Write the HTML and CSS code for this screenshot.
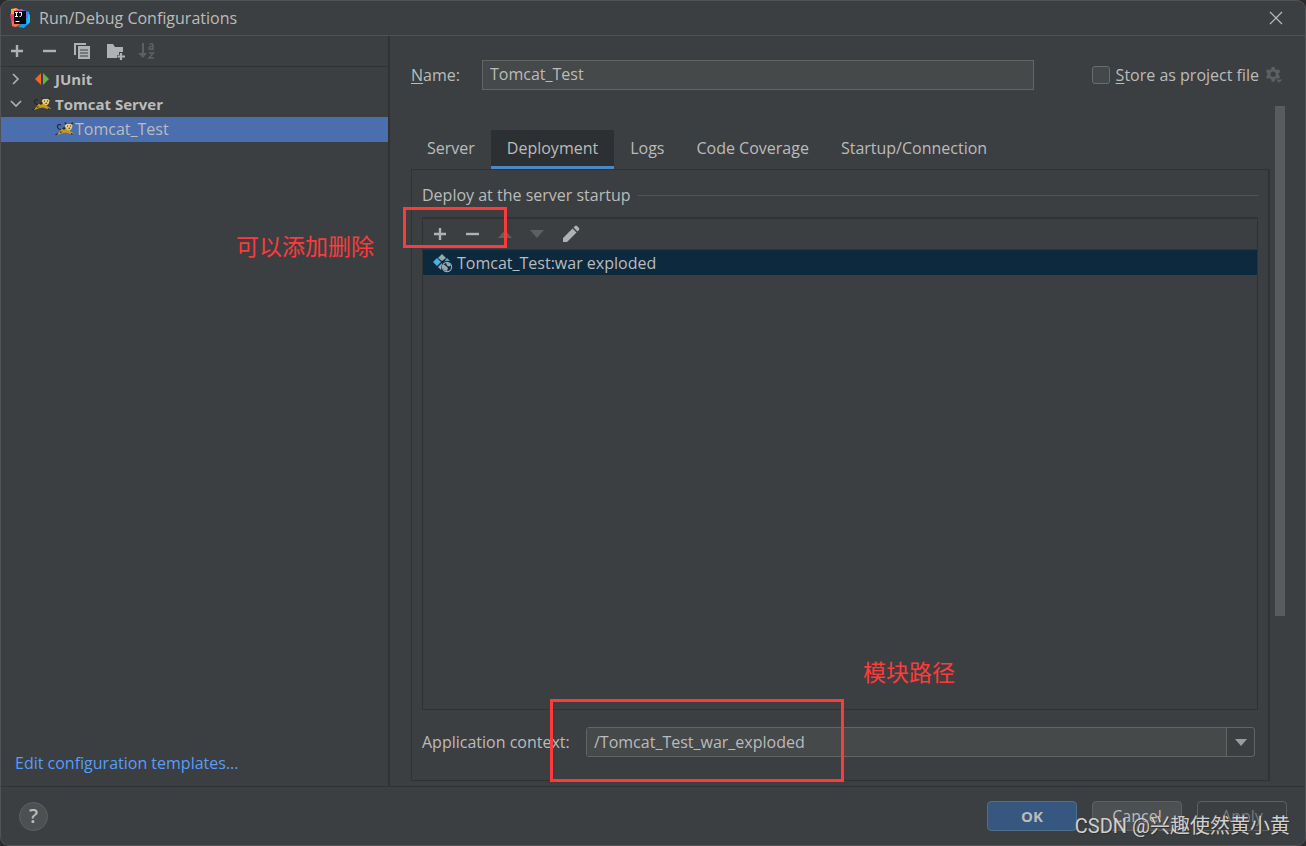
FILE: index.html
```html
<!DOCTYPE html>
<html lang="en">
<head>
<meta charset="utf-8">
<title>Run/Debug Configurations</title>
<link rel="stylesheet" href="styles.css">
</head>
<body>
<svg class="defs" aria-hidden="true">
  <symbol id="plus" viewBox="0 0 20 20"><path d="M10 4v12M4 10h12" stroke="currentColor" stroke-width="2.4" fill="none"/></symbol>
  <symbol id="minus" viewBox="0 0 20 20"><path d="M3 10h13" stroke="currentColor" stroke-width="2.4" fill="none"/></symbol>
  <symbol id="tomcat" viewBox="0 0 20 16">
    <path d="M6.500 8.500C3 9 1.500 5.500 3 4c1-1 2.500-.5 3 .5" fill="none" stroke="#20242a" stroke-width="1.100"/>
    <path d="M6 8.500l4-2 3 1 2 2.500 3.500 2v1.200l-4-.4-3.500-1.200-4 .6-4 1.600H1l3-2.300z" fill="#c99a1a"/>
    <path d="M7 7.500l2-1.500 2 1-2 2zM0 13.500l3-1.500v1l-2 1.200zM16 12l3 1.200-3 .2zM5 10.500l3 .5-3 .8z" fill="#25272a"/>
    <path d="M10 2.500l2 .5h3l2-.5.5 2.500-1 3-2 1.500-3-1.500-1.500-2.500z" fill="#e6cd7e"/>
    <path d="M9.500 1l2.500 1.500-2 1.500zM18 1l-2.500 1.500 2 1.500zM12 4.500h1v1h-1zM15 4.500h1v1h-1zM13.500 6.800h1.500v1h-1.500z" fill="#25272a"/>
  </symbol>
</svg>
<div class="dialog">
  <header class="titlebar">
    <svg class="logo" viewBox="0 0 20 20" aria-hidden="true">
      <path d="M1 1l5-1 6 3-4 9-7 1z" fill="#fca43c"/>
      <path d="M6 2l6-1 4 4-8 5z" fill="#f43b92"/>
      <path d="M0 6l6 1v12l-4-1z" fill="#f3346c"/>
      <path d="M2 13l9 3-5 3-4-1z" fill="#fb704a"/>
      <path d="M12 2l7 2 1 10-6 6-6-1 5-5z" fill="#149cf2"/>
      <path d="M13 2l3 1 2 4-2 4z" fill="#7960e8"/>
      <path d="M18 6l2 1v7l-3 3z" fill="#12c6f4"/>
      <path d="M4 3h12v13H4z" fill="#080508"/>
      <path d="M5 4.500h3M6.500 4.500v4M5 8.500h3M9 4.500h2.500v3q0 1-2 1M5.500 13.500h4" stroke="#fff" fill="none"/>
    </svg>
    <h1 class="title">Run/Debug Configurations</h1>
    <button class="close" aria-label="Close"><svg viewBox="0 0 14 14"><path d="M1 1l12 12M13 1L1 13" stroke="currentColor" stroke-width="1.200"/></svg></button>
  </header>
  <div class="content">
    <aside class="sidebar">
      <div class="toolbar">
        <button class="tool" aria-label="Add"><svg><use href="#plus"/></svg></button>
        <button class="tool" aria-label="Remove"><svg><use href="#minus"/></svg></button>
        <button class="tool" aria-label="Copy"><svg viewBox="0 0 20 20"><path d="M1 14V2h12v2H3v10z" fill="currentColor"/><path d="M5 5h12v13H5z" fill="currentColor"/><path d="M7 9h8M7 12h8M7 15h8" stroke="#3c3f41" stroke-width="1"/></svg></button>
        <button class="tool" aria-label="New folder"><svg viewBox="0 0 20 20"><path d="M1 3h6l2 3h8v5h-4v3h-2v3H1z" fill="currentColor"/><path d="M15 12v7M11.500 15.500h7.500" stroke="currentColor" stroke-width="2.200"/></svg></button>
        <button class="tool off" aria-label="Sort alphabetically" disabled><svg viewBox="0 0 20 20"><path d="M3 2h2v10h3l-4 5-5-5h4z" fill="currentColor"/><g fill="none" stroke="currentColor" stroke-width="1.500"><path d="M10.500 3.500q3.500-2 3.500 1V9M14 5.500q-4-.5-4 1.700 0 2 4 .3M10 12h4.500l-4.500 5h5"/></g></svg></button>
      </div>
      <ul class="tree">
        <li class="node"><svg class="chevron" viewBox="0 0 12 12"><path d="M3 1l5 5-5 5"/></svg><svg class="kind" viewBox="0 0 20 16"><path d="M9 2v12L3 8z" fill="#f26522"/><path d="M11 2v12l6-6z" fill="#62b543"/></svg><b>JUnit</b></li>
        <li class="node"><svg class="chevron" viewBox="0 0 12 12"><path d="M1 3l5 5 5-5"/></svg><svg class="kind"><use href="#tomcat"/></svg><b>Tomcat Server</b></li>
        <li class="node leaf"><svg class="kind"><use href="#tomcat"/></svg><span>Tomcat_Test</span></li>
      </ul>
      <a class="templates" href="#">Edit configuration templates...</a>
    </aside>
    <main class="main">
      <div class="name-row">
        <label class="name-label" for="name"><u>N</u>ame:</label>
        <input class="field" id="name" type="text" value="Tomcat_Test">
        <div class="store">
          <input class="check" id="store" type="checkbox">
          <label for="store"><u>S</u>tore as project file</label>
          <button class="gear" aria-label="Storage options"><svg viewBox="0 0 20 20"><path d="M7 1h3l.5 2.300 1.700 1 2.200-.8 1.600 2.700-1.700 1.500v1.800L16 11l-1.600 2.700-2.200-.8-1.700 1L10 16.500H7l-.5-2.600-1.700-1-2.200.8L1 11l1.700-1.500V7.700L1 6.200l1.600-2.700 2.200.8 1.700-1zM8.500 5.800a2.800 2.800 0 1 0 0 5.600 2.800 2.800 0 0 0 0-5.600z" fill="currentColor" fill-rule="evenodd"/><path d="M11 14h8l-4 4z" fill="currentColor" stroke="#3c3f41" stroke-width=".6"/></svg></button>
        </div>
      </div>
      <div class="scroll-area">
        <div class="page">
          <nav class="tabs" role="tablist">
            <button class="tab" role="tab">Server</button>
            <button class="tab active" role="tab" aria-selected="true">Deployment</button>
            <button class="tab" role="tab">Logs</button>
            <button class="tab" role="tab">Code Coverage</button>
            <button class="tab" role="tab">Startup/Connection</button>
          </nav>
          <section class="panel">
            <h2 class="legend">Deploy at the server startup</h2>
            <div class="artifacts">
              <div class="toolbar inner">
                <button class="tool" aria-label="Add artifact"><svg><use href="#plus"/></svg></button>
                <button class="tool" aria-label="Remove artifact"><svg><use href="#minus"/></svg></button>
                <button class="tool off" aria-label="Move up" disabled><svg viewBox="0 0 20 20"><path d="M2 14l7-8 7 8z" fill="currentColor"/></svg></button>
                <button class="tool off" aria-label="Move down" disabled><svg viewBox="0 0 20 20"><path d="M1 6h14l-7 8z" fill="currentColor"/></svg></button>
                <button class="tool" aria-label="Edit"><svg viewBox="0 0 20 20"><path d="M1 14l9.500-9.500 4 4L5 18H1zM11.500 3.500l1.500-1.500q1-.8 2 0l2 2q.8 1 0 2l-1.500 1.500z" fill="currentColor"/></svg></button>
                <div class="mark mark-add"></div>
              </div>
              <ul class="list">
                <li class="artifact"><svg viewBox="0 0 20 20"><path d="M9 1l4 4-4 3-4-3z" fill="#9aa7b0"/><path d="M4 5l4 4-4 4-4-4z" fill="#40b6e0"/><path d="M14 5l3 3q-4-1-6 1z" fill="#40b6e0"/><path d="M9 10l-1 7-3-3z" fill="#9aa7b0"/><circle cx="14" cy="14" r="4.600" fill="none" stroke="#9aa7b0" stroke-width="1.200"/><path d="M10 11l3 2 2 2-1 3-3-1-1.500-3zM13 9.500l4 1 1 2-2 1-2-1z" fill="#9aa7b0"/></svg><span>Tomcat_Test:war exploded</span></li>
              </ul>
            </div>
            <div class="context-row">
              <label for="context">Application context:</label>
              <div class="combo">
                <input id="context" type="text" value="/Tomcat_Test_war_exploded">
                <button aria-label="Show contexts"><svg viewBox="0 0 12 7"><path d="M0 0h12L6 7z" fill="currentColor"/></svg></button>
              </div>
              <div class="mark mark-context"></div>
            </div>
          </section>
        </div>
        <div class="track"><div class="thumb"></div></div>
      </div>
    </main>
  </div>
  <footer class="footer">
    <button class="help" aria-label="Help">?</button>
    <button class="button primary">OK</button>
    <button class="button">Cancel</button>
    <button class="button ghost" disabled>Apply</button>
  </footer>
  <p class="note note-add" lang="zh">可以添加删除</p>
  <p class="note note-path" lang="zh">模块路径</p>
  <p class="watermark" lang="zh">CSDN @兴趣使然黄小黄</p>
</div>
</body>
</html>
```
FILE: styles.css
```css
* { box-sizing: border-box; }
body { margin: 0; background: #2b2b2b; }
body, button, input {
  font-family: "Open Sans", "Noto Sans CJK SC", sans-serif;
  font-size: 16px;
  line-height: 20px;
  color: #bbbbbb;
}
button { padding: 0; border: 0; background: none; }
svg { display: block; flex: none; }
ul { list-style: none; margin: 0; padding: 0; }
u { text-underline-offset: 2px; }
.defs { position: absolute; width: 0; height: 0; }

.dialog {
  position: relative;
  display: flex;
  flex-direction: column;
  min-height: 100vh;
  background: #3c3f41;
  border: 1px solid #505355;
  border-radius: 9px;
}
.titlebar {
  display: flex;
  align-items: center;
  height: 35px;
  padding: 0 22px 0 9px;
  border-bottom: 1px solid #505355;
}
.logo { width: 20px; height: 20px; }
.title { flex: 1; margin: 0 0 0 9px; font-size: 16px; font-weight: 400; }
.close svg { width: 14px; height: 14px; }

.content { flex: 1; display: flex; }
.sidebar {
  display: flex;
  flex-direction: column;
  flex: 0 0 389px;
  border-right: 2px solid #323232;
}
.toolbar {
  display: flex;
  align-items: center;
  gap: 13px;
  height: 31px;
  padding: 0 6px;
  border-bottom: 1px solid #323232;
}
.tool { color: #afb1b3; }
.tool svg { width: 20px; height: 20px; overflow: visible; }
.tool.off { color: #5d6062; }
.tree { flex: 1; }
.node { display: flex; align-items: center; height: 25px; padding: 0 0 2px 9px; }
.node b { font-size: 15px; }
.leaf { padding-left: 54px; background: #4b6eaf; }
.chevron { width: 12px; height: 12px; margin-right: 10px; fill: none; stroke: #afb1b3; stroke-width: 1.6; }
.kind { width: 20px; height: 16px; margin-right: 3px; }
.leaf .kind { margin-right: 0; }
.templates { margin: 0 14px 13px; color: #589df6; text-decoration: none; }

.main { flex: 1; display: flex; flex-direction: column; padding: 24px 20px 5px 21px; }
.name-row { display: flex; align-items: center; height: 30px; }
.name-label { flex: 0 0 71px; }
.field {
  flex: 1;
  height: 30px;
  min-width: 0;
  padding: 0 7px 2px;
  border: 1px solid #646464;
  background: #45494a;
}
.store { display: flex; align-items: center; margin-left: 58px; }
.check { appearance: none; width: 18px; height: 18px; margin: 0 6px 0 0; border: 1px solid #6b6b6b; border-radius: 3px; background: #43494a; }
.gear { margin: 0 1px 0 6px; color: #5d6062; }
.gear svg { width: 19px; height: 19px; }

.scroll-area { flex: 1; display: flex; gap: 5px; margin-top: 16px; }
.page { flex: 1; display: flex; flex-direction: column; padding-top: 24px; }
.track { flex: 0 0 10px; }
.thumb { height: 510px; max-height: 76%; background: #595b5d; }
.tabs { display: flex; }
.tab { height: 39px; padding: 0 16px 3px; }
.tab.active { background: #2d3033; box-shadow: inset 0 -3px #4a88c7; }
.panel { flex: 1; display: flex; flex-direction: column; padding: 15px 10px 23px; border: 1px solid #323232; border-right-width: 2px; }
.legend { display: flex; align-items: center; gap: 7px; margin: 0; font-size: 16px; font-weight: 400; }
.legend::after { content: ""; flex: 1; height: 1px; background: #515456; }
.artifacts { flex: 1; margin-top: 12px; border: 1px solid #323232; border-top-width: 2px; }
.inner { position: relative; padding: 0 7px; }
.artifact { display: flex; align-items: center; gap: 4px; height: 25px; padding-left: 10px; background: #0d293e; }
.artifact svg { width: 20px; height: 20px; }
.context-row { position: relative; display: flex; align-items: center; margin-top: 17px; }
.context-row label { flex: 0 0 164px; }
.combo { flex: 1; display: flex; height: 30px; margin-right: 3px; border: 1px solid #646464; border-radius: 3px; }
.combo input { flex: 1; min-width: 0; padding: 0 7px; border: 0; background: #45494a; }
.combo button { display: grid; place-items: center; width: 28px; border-left: 1px solid #646464; color: #9a9da0; }
.combo button svg { width: 12px; height: 7px; }

.footer { display: flex; align-items: center; gap: 15px; height: 59px; padding: 0 18px; border-top: 1px solid #323232; }
.help { width: 29px; height: 29px; margin-right: auto; border: 1px solid #5e6062; border-radius: 50%; background: #4c5052; font-size: 20px; font-weight: 600; }
.button { width: 90px; height: 30px; border: 1px solid #5e6060; border-radius: 4px; background: #4c5052; }
.primary { border-color: #4c708c; background: #365880; font-size: 15px; font-weight: 700; }
.ghost { background: none; color: #777777; }

.mark { position: absolute; border: 3px solid #fd3b3b; }
.mark-add { left: -20px; top: -12px; width: 104px; height: 41px; }
.mark-context { left: 128px; top: -28px; width: 294px; height: 83px; }
.note { position: absolute; margin: 0; font-size: 23px; line-height: 32px; color: #fd3b3b; }
.note-add { left: 235px; top: 229px; }
.note-path { left: 862px; bottom: 157px; }
.watermark {
  position: absolute;
  right: 15px;
  bottom: 4px;
  margin: 0;
  font-family: Roboto, "Noto Sans CJK SC", sans-serif;
  font-size: 20px;
  line-height: 30px;
  color: #d0d0d0;
  text-shadow: 1px 1px #303030;
}
```
